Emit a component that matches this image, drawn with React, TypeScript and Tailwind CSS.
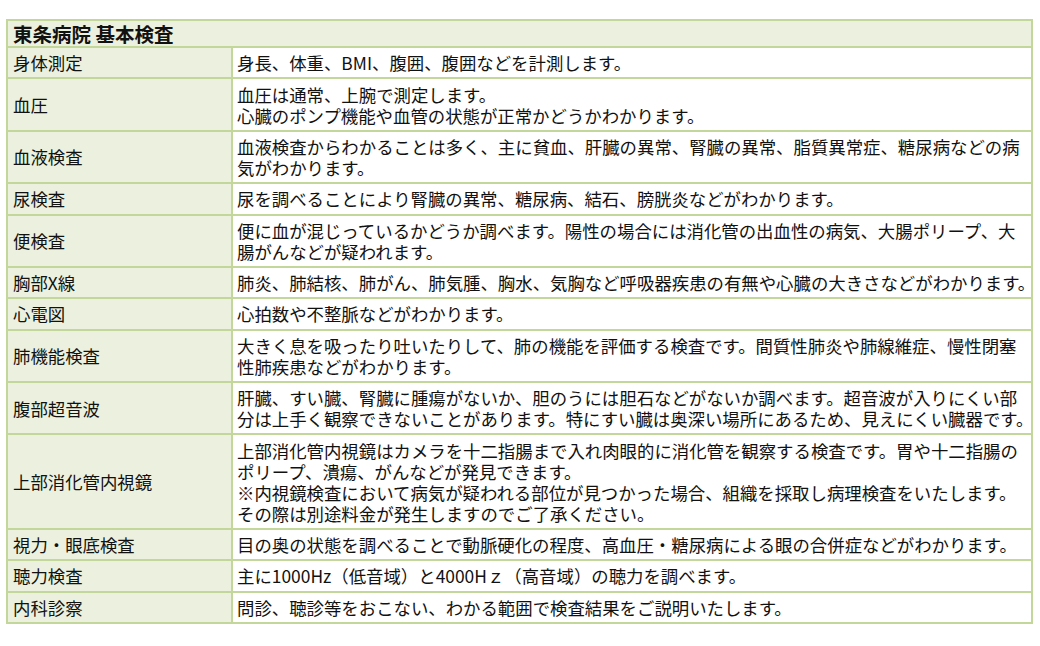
import React from "react";

const rows: { name: string; lines: string[] }[] = [
  { name: "身体測定", lines: ["身長、体重、BMI、腹囲、腹囲などを計測します。"] },
  {
    name: "血圧",
    lines: ["血圧は通常、上腕で測定します。", "心臓のポンプ機能や血管の状態が正常かどうかわかります。"],
  },
  {
    name: "血液検査",
    lines: [
      "血液検査からわかることは多く、主に貧血、肝臓の異常、腎臓の異常、脂質異常症、糖尿病などの病",
      "気がわかります。",
    ],
  },
  { name: "尿検査", lines: ["尿を調べることにより腎臓の異常、糖尿病、結石、膀胱炎などがわかります。"] },
  {
    name: "便検査",
    lines: [
      "便に血が混じっているかどうか調べます。陽性の場合には消化管の出血性の病気、大腸ポリープ、大",
      "腸がんなどが疑われます。",
    ],
  },
  {
    name: "胸部X線",
    lines: ["肺炎、肺結核、肺がん、肺気腫、胸水、気胸など呼吸器疾患の有無や心臓の大きさなどがわかります。"],
  },
  { name: "心電図", lines: ["心拍数や不整脈などがわかります。"] },
  {
    name: "肺機能検査",
    lines: [
      "大きく息を吸ったり吐いたりして、肺の機能を評価する検査です。間質性肺炎や肺線維症、慢性閉塞",
      "性肺疾患などがわかります。",
    ],
  },
  {
    name: "腹部超音波",
    lines: [
      "肝臓、すい臓、腎臓に腫瘍がないか、胆のうには胆石などがないか調べます。超音波が入りにくい部",
      "分は上手く観察できないことがあります。特にすい臓は奥深い場所にあるため、見えにくい臓器です。",
    ],
  },
  {
    name: "上部消化管内視鏡",
    lines: [
      "上部消化管内視鏡はカメラを十二指腸まで入れ肉眼的に消化管を観察する検査です。胃や十二指腸の",
      "ポリープ、潰瘍、がんなどが発見できます。",
      "※内視鏡検査において病気が疑われる部位が見つかった場合、組織を採取し病理検査をいたします。",
      "その際は別途料金が発生しますのでご了承ください。",
    ],
  },
  {
    name: "視力・眼底検査",
    lines: ["目の奥の状態を調べることで動脈硬化の程度、高血圧・糖尿病による眼の合併症などがわかります。"],
  },
  { name: "聴力検査", lines: ["主に1000Hz（低音域）と4000Hｚ（高音域）の聴力を調べます。"] },
  { name: "内科診察", lines: ["問診、聴診等をおこない、わかる範囲で検査結果をご説明いたします。"] },
];

export default function App() {
  return (
    <div
      lang="ja"
      className="min-h-[646px] bg-white pt-[19px] pl-[6px] text-[17.4px] leading-[21px] text-[#111]"
      style={{ fontFamily: '"Noto Sans CJK JP", "Noto Sans", sans-serif' }}
    >
      <table className="w-[1027px] table-fixed border-collapse border-2 border-[#c4d79b]">
        <colgroup>
          <col className="w-[225px]" />
          <col />
        </colgroup>
        <thead>
          <tr>
            <th
              colSpan={2}
              className="h-[27px] border-2 border-[#c4d79b] bg-[#ebf1de] px-[5px] py-0 text-left text-[19.5px] font-bold"
            >
              東条病院&nbsp;基本検査
            </th>
          </tr>
        </thead>
        <tbody>
          {rows.map((row) => (
            <tr key={row.name}>
              <td className="border-2 border-[#c4d79b] bg-[#ebf1de] px-[5px] py-[4.2px] align-middle">
                {row.name}
              </td>
              <td className="border-2 border-[#c4d79b] bg-white px-[4px] py-[4.2px] align-middle">
                {row.lines.map((line, i) => (
                  <div key={i} className="whitespace-nowrap">
                    {line}
                  </div>
                ))}
              </td>
            </tr>
          ))}
        </tbody>
      </table>
    </div>
  );
}
